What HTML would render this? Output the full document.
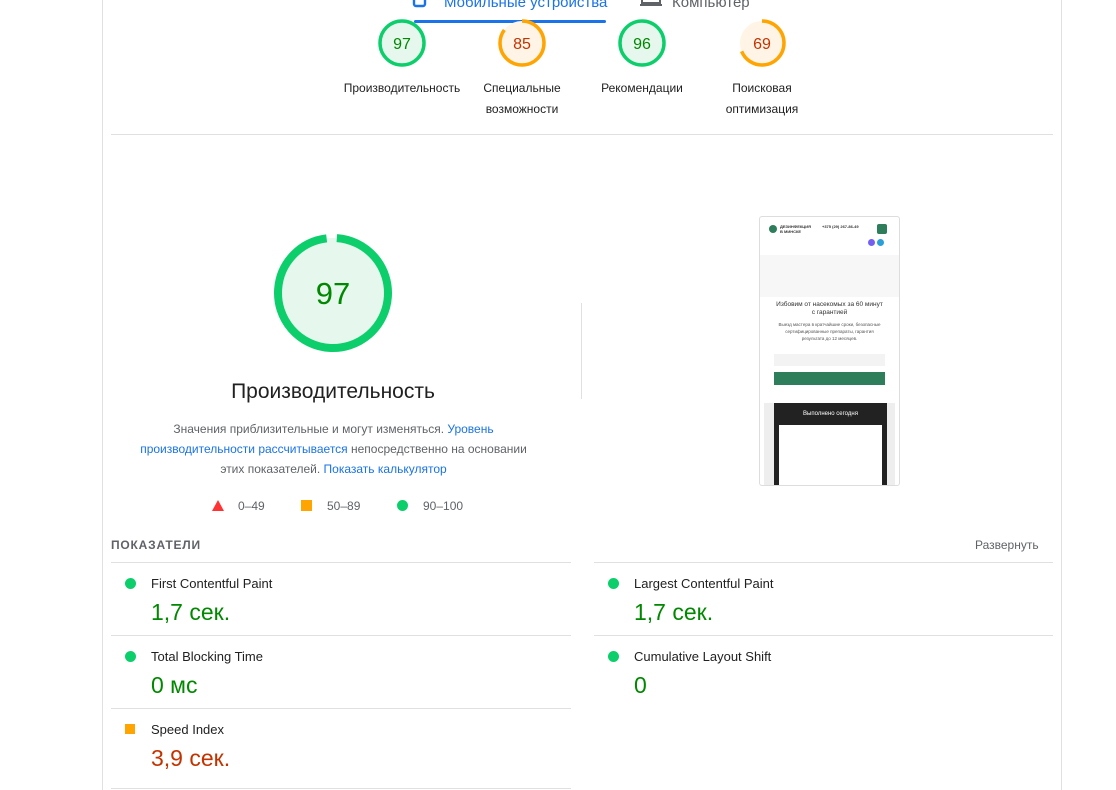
<!DOCTYPE html><html><head><meta charset="utf-8"><style>
body{margin:0;width:1116px;height:790px;background:#fff;font-family:"Liberation Sans",Arial,sans-serif;position:relative;overflow:hidden;color:#212121}
.a{position:absolute}
.vl{position:absolute;top:0;height:790px;width:1px;background:#e0e0e0}
.lbl{position:absolute;font-size:12px;color:#212121;text-align:center;line-height:21px;width:130px}
.g{position:absolute;width:50px;height:50px}
.g text{font-size:16px}
.hr{position:absolute;height:1px;background:#e0e0e0}
.mn{position:absolute;font-size:13px;color:#212121}
.mv{position:absolute;font-size:23px}
.dot{position:absolute;width:11px;height:11px;border-radius:50%;background:#0cce6b}
</style></head><body>
<div class="vl" style="left:102px"></div><div class="vl" style="left:1061px"></div>
<!-- tabs -->
<svg class="a" style="left:412px;top:-6px" width="16" height="14"><rect x="2" y="0" width="11" height="12" rx="2" fill="none" stroke="#1a73e8" stroke-width="2.4"/></svg>
<div class="a" style="left:444px;top:-6px;font-size:15px;color:#1a73e8">Мобильные устройства</div>
<div class="a" style="left:414px;top:20px;width:192px;height:3px;background:#1a73e8;border-radius:2px"></div>
<svg class="a" style="left:640px;top:-6px" width="24" height="16"><rect x="2" y="0" width="18" height="9" fill="none" stroke="#5f6368" stroke-width="2"/><rect x="0" y="10" width="22" height="2" fill="#5f6368"/></svg>
<div class="a" style="left:672px;top:-6px;font-size:15px;color:#5f6368">Компьютер</div>
<!-- small gauges -->
<svg class="a" style="left:377px;top:18px" width="600" height="52">
<g transform="translate(25,25)"><circle r="22" fill="#e6f8ed" stroke="#0cce6b" stroke-width="3.5"/><text y="6" text-anchor="middle" fill="#008800" font-size="16" font-family="Liberation Sans">97</text></g>
<g transform="translate(145,25)"><circle r="22" fill="#fff4e6"/><circle r="22" fill="none" stroke="#ffa400" stroke-width="3.5" stroke-dasharray="117.5 200" transform="rotate(-90)"/><text y="6" text-anchor="middle" fill="#c33300" font-size="16" font-family="Liberation Sans">85</text></g>
<g transform="translate(265,25)"><circle r="22" fill="#e6f8ed" stroke="#0cce6b" stroke-width="3.5"/><text y="6" text-anchor="middle" fill="#008800" font-size="16" font-family="Liberation Sans">96</text></g>
<g transform="translate(385,25)"><circle r="22" fill="#fff4e6"/><circle r="22" fill="none" stroke="#ffa400" stroke-width="3.5" stroke-dasharray="95 200" transform="rotate(-90)"/><text y="6" text-anchor="middle" fill="#c33300" font-size="16" font-family="Liberation Sans">69</text></g>
</svg>
<div class="lbl" style="left:337px;top:78px">Производительность</div>
<div class="lbl" style="left:457px;top:78px">Специальные<br>возможности</div>
<div class="lbl" style="left:577px;top:78px">Рекомендации</div>
<div class="lbl" style="left:697px;top:78px">Поисковая<br>оптимизация</div>
<div class="hr" style="left:111px;top:134px;width:942px"></div>
<!-- big gauge -->
<svg class="a" style="left:271px;top:231px" width="124" height="124"><g transform="translate(62,62)"><circle r="55" fill="#e6f8ed"/><circle r="55" fill="none" stroke="#0cce6b" stroke-width="8" stroke-dasharray="335 400" transform="rotate(-86)"/><text y="11" text-anchor="middle" fill="#008800" font-size="31" font-family="Liberation Sans">97</text></g></svg>
<div class="a" style="left:183px;top:380px;width:300px;text-align:center;font-size:21px;color:#212121">Производительность</div>
<div class="a" style="left:136px;top:419px;width:395px;text-align:center;font-size:12px;line-height:20px;color:#5f6368">Значения приблизительные и могут изменяться. <span style="color:#1a73e8">Уровень производительности рассчитывается</span> непосредственно на основании этих показателей. <span style="color:#1a73e8">Показать калькулятор</span></div>
<svg class="a" style="left:211px;top:500px" width="14" height="12"><polygon points="7,0 13,11 1,11" fill="#ff3333"/></svg>
<div class="a" style="left:238px;top:499px;font-size:12px;color:#5f6368">0–49</div>
<div class="a" style="left:301px;top:500px;width:11px;height:11px;background:#ffa400"></div>
<div class="a" style="left:327px;top:499px;font-size:12px;color:#5f6368">50–89</div>
<div class="dot" style="left:397px;top:500px"></div>
<div class="a" style="left:423px;top:499px;font-size:12px;color:#5f6368">90–100</div>
<div class="a" style="left:581px;top:303px;width:1px;height:96px;background:#e0e0e0"></div>
<!-- screenshot thumb -->
<div class="a" style="left:759px;top:216px;width:139px;height:268px;border:1px solid #ddd;border-radius:3px;overflow:hidden;background:#fff;font-size:5px;color:#333">
<div class="a" style="left:9px;top:8px;width:8px;height:8px;border-radius:50%;background:#2e7d5b"></div>
<div class="a" style="left:20px;top:7px;font-weight:bold;font-size:4px;line-height:5px">ДЕЗИНФЕКЦИЯ<br>В МИНСКЕ</div>
<div class="a" style="left:62px;top:7px;font-size:4px;font-weight:bold">+375 (29) 267-86-49</div>
<div class="a" style="left:117px;top:7px;width:10px;height:10px;background:#2e7d5b;border-radius:2px"></div>
<div class="a" style="left:108px;top:22px;width:7px;height:7px;border-radius:50%;background:#7360f2"></div>
<div class="a" style="left:117px;top:22px;width:7px;height:7px;border-radius:50%;background:#2a9fd8"></div>
<div class="a" style="left:0;top:38px;width:139px;height:42px;background:#f7f7f7"></div>
<div class="a" style="left:14px;top:80px;width:111px;font-size:6.5px;text-align:center;line-height:8px;top:84px">Избовим от насекомых за 60 минут с гарантией</div>
<div class="a" style="left:18px;top:104px;width:103px;font-size:4.5px;text-align:center;line-height:7px;color:#555">Выезд мастера в кратчайшие сроки, безопасные сертифицированные препараты, гарантия результата до 12 месяцев.</div>
<div class="a" style="left:14px;top:137px;width:111px;height:12px;background:#f3f3f3"></div>
<div class="a" style="left:14px;top:155px;width:111px;height:13px;background:#2e7d5b"></div>
<div class="a" style="left:4px;top:186px;width:131px;height:82px;background:#eee"></div>
<div class="a" style="left:14px;top:186px;width:113px;height:82px;background:#222"></div>
<div class="a" style="left:14px;top:194px;width:113px;text-align:center;color:#fff;font-size:6px">Выполнено сегодня</div>
<div class="a" style="left:19px;top:208px;width:103px;height:60px;background:#fff"></div>
</div>
<!-- metrics -->
<div class="a" style="left:111px;top:538px;font-size:12px;letter-spacing:.8px;color:#5f6368;font-weight:bold">ПОКАЗАТЕЛИ</div>
<div class="a" style="left:975px;top:538px;font-size:12px;color:#5f6368">Развернуть</div>
<div class="hr" style="left:111px;top:562px;width:460px"></div><div class="hr" style="left:594px;top:562px;width:459px"></div>
<div class="dot" style="left:125px;top:578px"></div><div class="mn" style="left:151px;top:576px">First Contentful Paint</div><div class="mv" style="left:151px;top:599px;color:#008800">1,7 сек.</div>
<div class="dot" style="left:608px;top:578px"></div><div class="mn" style="left:634px;top:576px">Largest Contentful Paint</div><div class="mv" style="left:634px;top:599px;color:#008800">1,7 сек.</div>
<div class="hr" style="left:111px;top:635px;width:460px"></div><div class="hr" style="left:594px;top:635px;width:459px"></div>
<div class="dot" style="left:125px;top:651px"></div><div class="mn" style="left:151px;top:649px">Total Blocking Time</div><div class="mv" style="left:151px;top:672px;color:#008800">0 мс</div>
<div class="dot" style="left:608px;top:651px"></div><div class="mn" style="left:634px;top:649px">Cumulative Layout Shift</div><div class="mv" style="left:634px;top:672px;color:#008800">0</div>
<div class="hr" style="left:111px;top:708px;width:460px"></div>
<div class="a" style="left:125px;top:724px;width:10px;height:10px;background:#ffa400"></div><div class="mn" style="left:151px;top:722px">Speed Index</div><div class="mv" style="left:151px;top:745px;color:#c33300">3,9 сек.</div>
<div class="hr" style="left:111px;top:788px;width:460px"></div>
</body></html>
